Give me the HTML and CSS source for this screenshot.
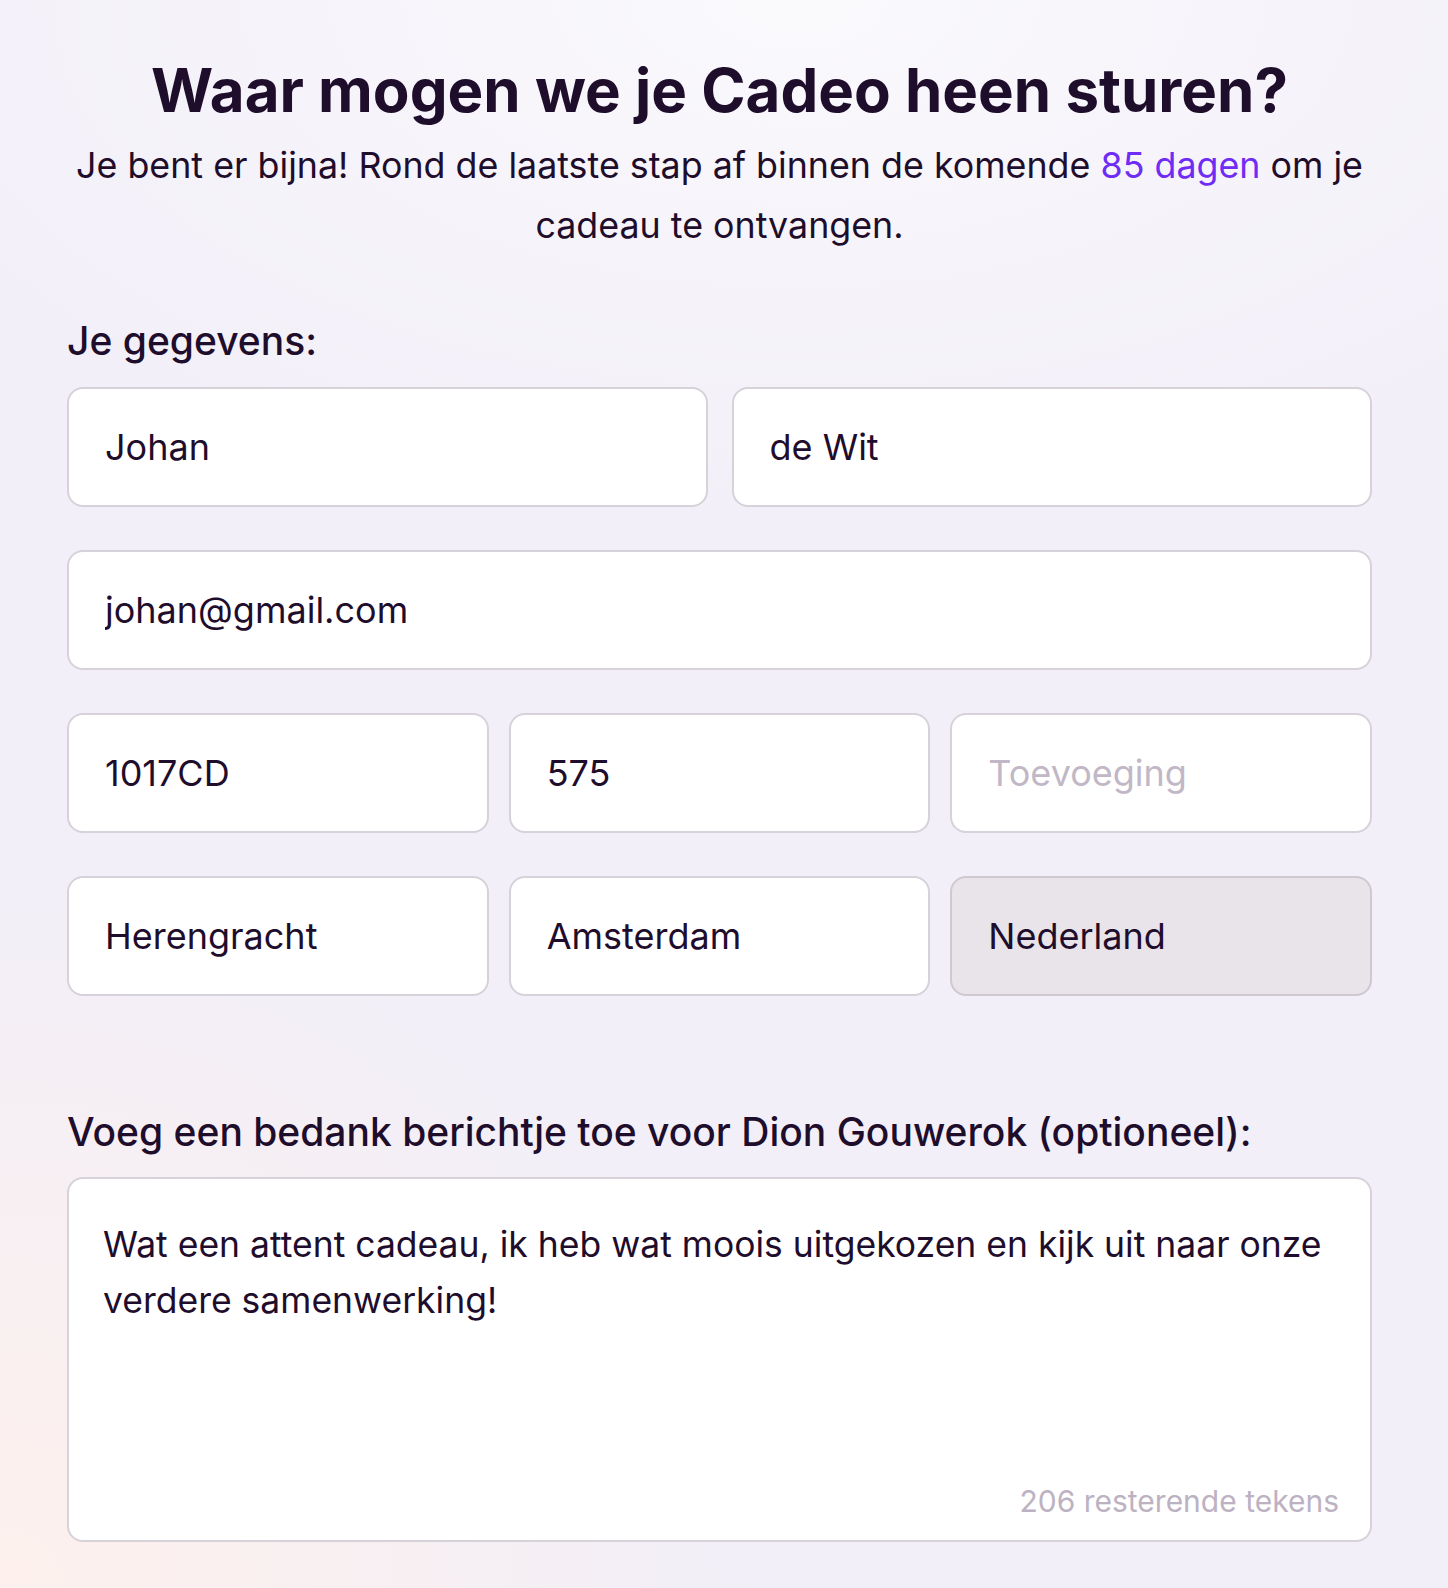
FILE: index.html
```html
<!DOCTYPE html>
<html lang="nl">
<head>
<meta charset="utf-8">
<title>Waar mogen we je Cadeo heen sturen?</title>
<link rel="stylesheet" href="styles.css">
</head>
<body>
<main class="page">
  <header class="intro">
    <h1 class="title">Waar mogen we je Cadeo heen sturen?</h1>
    <p class="subtitle">Je bent er bijna! Rond de laatste stap af binnen de komende <span class="accent">85 dagen</span> om je<br>cadeau te ontvangen.</p>
  </header>

  <section class="details">
    <h2 class="label">Je gegevens:</h2>
    <div class="rows">
      <div class="row row-2">
        <input class="field" type="text" value="Johan" readonly>
        <input class="field" type="text" value="de Wit" readonly>
      </div>
      <div class="row row-1">
        <input class="field" type="email" value="johan@gmail.com" readonly>
      </div>
      <div class="row row-3">
        <input class="field" type="text" value="1017CD" readonly>
        <input class="field" type="text" value="575" readonly>
        <input class="field" type="text" placeholder="Toevoeging" readonly>
      </div>
      <div class="row row-3">
        <input class="field" type="text" value="Herengracht" readonly>
        <input class="field" type="text" value="Amsterdam" readonly>
        <input class="field field-disabled" type="text" value="Nederland" disabled>
      </div>
    </div>
  </section>

  <section class="message">
    <h2 class="label">Voeg een bedank berichtje toe voor Dion Gouwerok (optioneel):</h2>
    <div class="textbox">
      <textarea class="textarea" readonly>Wat een attent cadeau, ik heb wat moois uitgekozen en kijk uit naar onze verdere samenwerking!</textarea>
      <div class="counter">206 resterende tekens</div>
    </div>
  </section>
</main>
</body>
</html>
```

FILE: styles.css
```css
* { box-sizing: border-box; }

html, body {
  margin: 0;
  padding: 0;
}

body {
  min-height: 1588px;
  font-family: "Inter", "Liberation Sans", sans-serif;
  color: #1f0d2c;
  background:
    radial-gradient(ellipse 760px 720px at 0% 100%, rgba(253, 240, 236, 1) 0%, rgba(253, 240, 236, 0) 100%),
    radial-gradient(ellipse 1000px 520px at 55% 0%, rgba(250, 249, 252, 1) 0%, rgba(250, 249, 252, 0) 100%),
    #f2eff8;
}

.page {
  width: 1305px;
  margin-left: 67px;
  padding-top: 54px;
}

.intro {
  text-align: center;
}

.title {
  margin: 0;
  font-size: 60px;
  font-weight: 700;
  letter-spacing: 0;
  line-height: normal;
}

.subtitle {
  margin: 9px 0 0;
  font-size: 35.8px;
  font-weight: 400;
  line-height: 60px;
}

.accent {
  color: #6e2cf4;
}

.details {
  margin-top: 62px;
}

.label {
  margin: 0;
  font-size: 39px;
  font-weight: 500;
  line-height: normal;
}

.rows {
  margin-top: 23px;
  display: flex;
  flex-direction: column;
  gap: 43px;
}

.row {
  display: grid;
  height: 120px;
}

.row-1 { grid-template-columns: 1fr; }
.row-2 { grid-template-columns: 1fr 1fr; column-gap: 24px; }
.row-3 { grid-template-columns: 1fr 1fr 1fr; column-gap: 20px; }

.field {
  width: 100%;
  height: 100%;
  margin: 0;
  padding: 0 36px;
  border: 2px solid #d7d1da;
  border-radius: 16px;
  background: #ffffff;
  font-family: inherit;
  font-size: 36px;
  font-weight: 400;
  color: #1f0d2c;
  outline: none;
}

.field::placeholder {
  color: #c1b7c6;
  opacity: 1;
}

.field-disabled {
  background: #e8e4ea;
  border-color: #cfc8d2;
  color: #1f0d2c;
  -webkit-text-fill-color: #1f0d2c;
  opacity: 1;
}

.message {
  margin-top: 112px;
}

.textbox {
  margin-top: 22px;
  height: 365px;
  display: flex;
  flex-direction: column;
  border: 2px solid #d7d1da;
  border-radius: 16px;
  background: #ffffff;
  padding: 38px 31px 23px 34px;
}

.textarea {
  flex: 1;
  width: 100%;
  margin: 0;
  padding: 0;
  border: none;
  resize: none;
  outline: none;
  background: transparent;
  font-family: inherit;
  font-size: 35.5px;
  line-height: 56px;
  color: #1f0d2c;
  overflow: hidden;
}

.counter {
  text-align: right;
  font-size: 30px;
  line-height: 32px;
  color: #bdb2c2;
}
```
